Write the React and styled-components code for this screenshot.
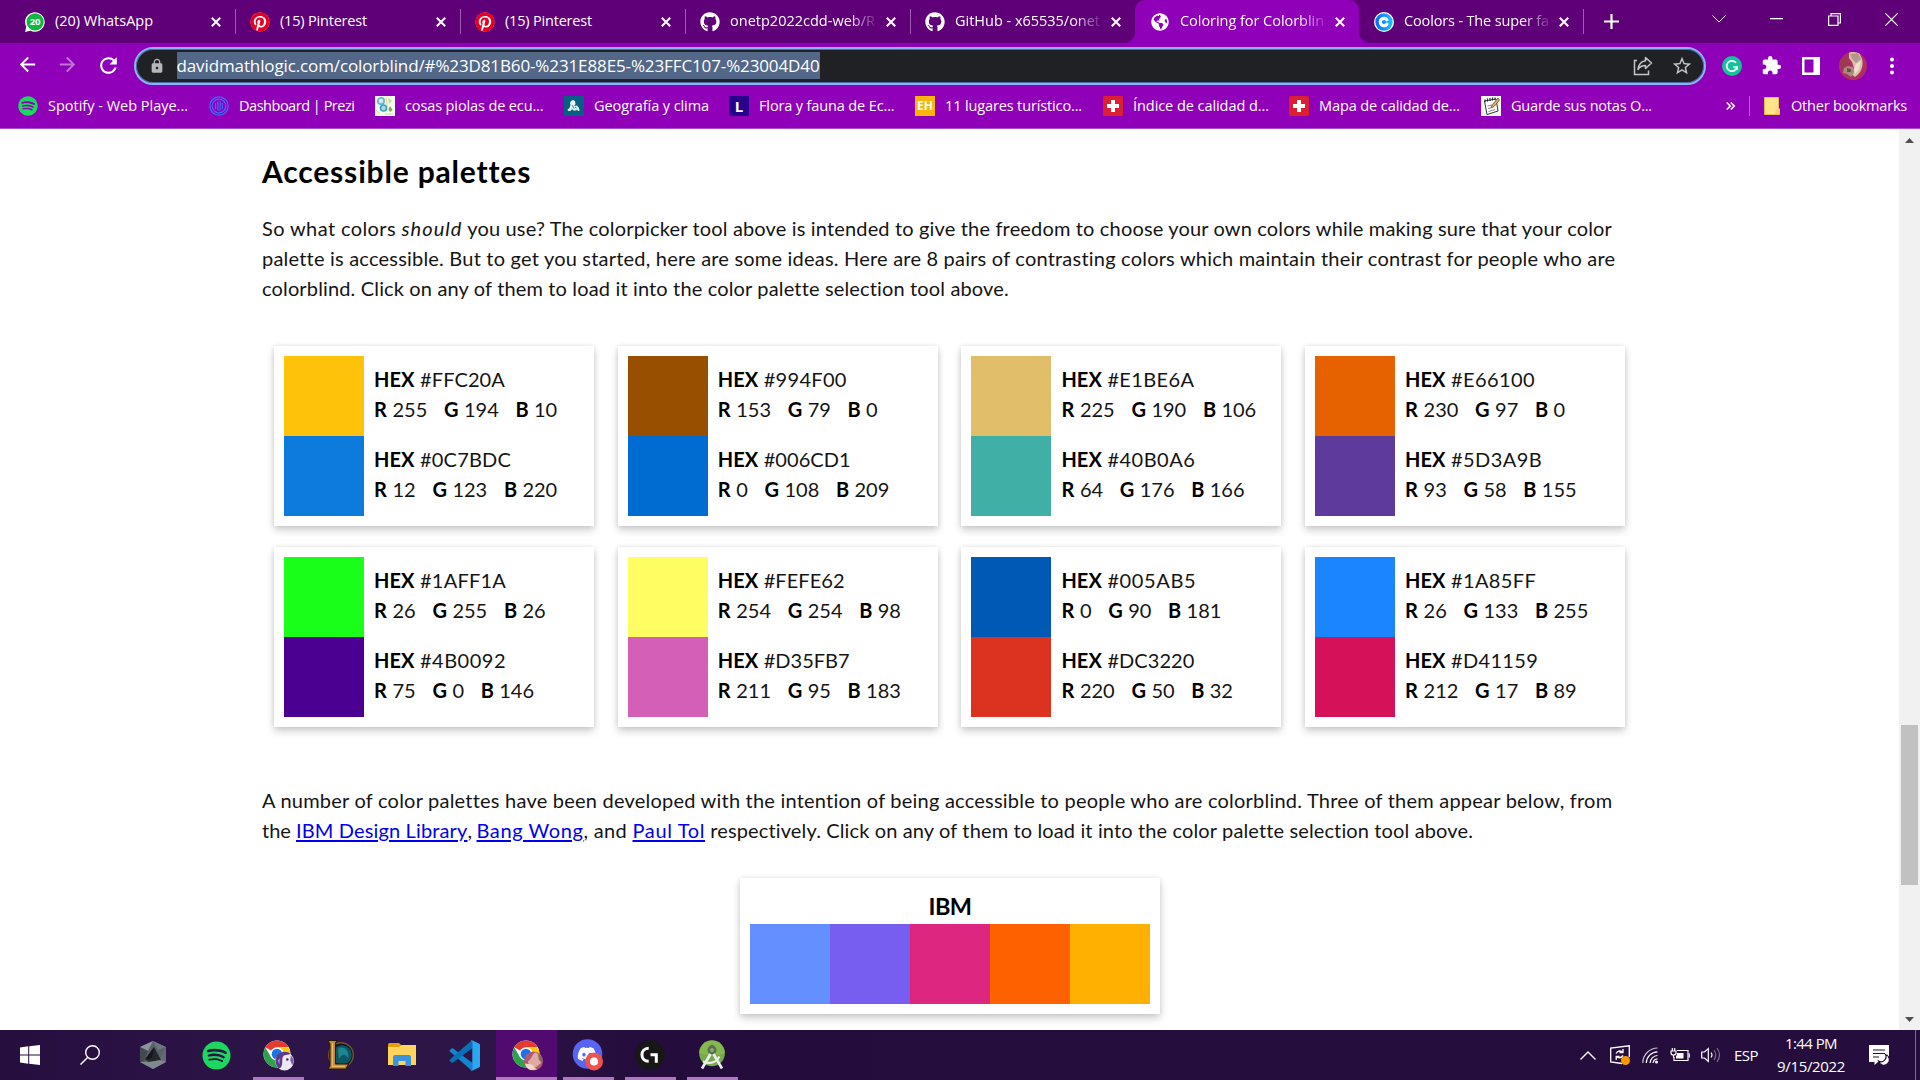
import React, { useLayoutEffect, useRef, useState } from "react";
import styled, { createGlobalStyle, css } from "styled-components";
import { FaPinterest, FaGithub, FaSpotify, FaDiscord, FaGlobeAmericas } from "react-icons/fa";
import { MdExtension, MdStarBorder, MdLock, MdRefresh, MdArrowBack, MdArrowForward } from "react-icons/md";

const UI_FONT = '"Open Sans", "Noto Sans", sans-serif';
const PAGE_FONT = 'Lato, "Open Sans", sans-serif';

const Global = createGlobalStyle`
  *, *::before, *::after { box-sizing: border-box; }
  html, body { margin: 0; padding: 0; overflow: hidden; background: #fff; }
  svg { display: block; flex: none; }
`;

/* ---------- text tracked out to a set measure ---------- */
const Tracked = styled.span`
  display: inline-block;
  white-space: pre;
  text-decoration: inherit;
`;

function Fit({ w, children, as, ...rest }) {
  const ref = useRef(null);
  const [spacing, setSpacing] = useState(0);
  useLayoutEffect(() => {
    const el = ref.current;
    const count = el.textContent.length;
    const natural = el.getBoundingClientRect().width;
    setSpacing((w - natural) / count);
  }, [w]);
  return (
    <Tracked ref={ref} as={as} style={{ letterSpacing: `${spacing}px` }} {...rest}>
      {children}
    </Tracked>
  );
}

/* ---------- frame ---------- */
const Screen = styled.div`
  width: 1920px;
  height: 1080px;
  display: flex;
  flex-direction: column;
  overflow: hidden;
  font-family: ${UI_FONT};
`;

/* ---------- tab strip ---------- */
const TabStrip = styled.div`
  height: 43px;
  flex: none;
  display: flex;
  align-items: stretch;
  padding-left: 10px;
  background: #5f0079;
  color: #fff;
`;

const TabBox = styled.div`
  position: relative;
  width: ${(p) => p.$w || 225}px;
  flex: none;
  display: flex;
  align-items: center;
  padding: 0 14px 0 15px;
  ${(p) =>
    p.$active &&
    css`
      background: #8f00b8;
      border-radius: 10px 10px 0 0;
      &::before,
      &::after {
        content: "";
        position: absolute;
        bottom: 0;
        width: 10px;
        height: 10px;
      }
      &::before {
        left: -10px;
        background: radial-gradient(circle at 0 0, transparent 9.5px, #8f00b8 10px);
      }
      &::after {
        right: -10px;
        background: radial-gradient(circle at 100% 0, transparent 9.5px, #8f00b8 10px);
      }
    `}
  ${(p) =>
    p.$sep &&
    css`
      &::after {
        content: "";
        position: absolute;
        right: -1px;
        top: 9px;
        width: 1px;
        height: 25px;
        background: #9a5cab;
      }
    `}
`;

const Fav = styled.div`
  width: 20px;
  height: 20px;
  flex: none;
  display: flex;
  align-items: center;
  justify-content: center;
  margin-right: 10px;
`;

const TabTitle = styled.div`
  flex: 1;
  font-size: 14.5px;
  line-height: 20px;
  white-space: nowrap;
  overflow: hidden;
  margin-bottom: 1px;
  ${(p) => p.$fade && css`mask-image: linear-gradient(90deg, #000 118px, transparent 149px);`}
`;

const NewTab = styled.div`
  display: flex;
  align-items: center;
  padding-left: 21px;
  flex: 1;
`;

const WindowButtons = styled.div`
  display: flex;
  align-items: center;
  height: 38px;
  gap: 40.5px;
  padding-right: 20px;
`;

const WinBtn = styled.div`
  width: 17px;
  display: flex;
  justify-content: center;
`;

/* ---------- toolbar ---------- */
const Toolbar = styled.div`
  height: 45px;
  flex: none;
  display: flex;
  align-items: center;
  background: #8f00b8;
  padding: 0 22px 0 16px;
  color: #fff;
`;

const NavButtons = styled.div`
  display: flex;
  gap: 17px;
  width: 118px;
  flex: none;
  svg:nth-child(2) { opacity: 0.45; }
`;

const Omnibox = styled.div`
  width: 1572px;
  height: 38px;
  flex: none;
  display: flex;
  align-items: center;
  border: 2px solid #8ab4f8;
  border-radius: 19px;
  box-shadow: inset 0 0 0 1px #4c6aa6;
  background: #202124;
  padding: 0 11px 0 13px;
`;

const Address = styled.div`
  height: 27px;
  margin-left: 11.5px;
  display: flex;
  align-items: center;
  background: #536788;
  color: #fff;
  font-size: 17px;
  line-height: 27px;
`;

const Spacer = styled.div`
  flex: 1;
`;

const OmniActions = styled.div`
  display: flex;
  align-items: center;
  gap: 18px;
  color: #c3c5c8;
`;

const Extensions = styled.div`
  flex: 1;
  display: flex;
  align-items: center;
  justify-content: space-between;
  padding-left: 16px;
`;

const Avatar = styled.div`
  width: 28px;
  height: 28px;
  border-radius: 50%;
  overflow: hidden;
`;

/* ---------- bookmarks ---------- */
const Bookmarks = styled.div`
  height: 41px;
  flex: none;
  display: flex;
  align-items: center;
  background: #8f00b8;
  border-bottom: 1px solid #b04ccc;
  padding: 0 13px 4px 18px;
  color: #fff;
  font-size: 14.5px;
`;

const Bookmark = styled.div`
  display: flex;
  align-items: center;
  width: ${(p) => p.$w}px;
  flex: none;
  line-height: 20px;
`;

const Tile = styled.div`
  width: 20px;
  height: 20px;
  display: flex;
  align-items: center;
  justify-content: center;
  border-radius: ${(p) => p.$r || 0}px;
  background: ${(p) => p.$bg};
  color: #fff;
  font: 700 ${(p) => p.$fs || 14}px/20px ${UI_FONT};
`;

const Divider = styled.div`
  width: 1px;
  height: 20px;
  background: #b85fd0;
  margin: 0 14px 0 13px;
`;

const OtherLabel = styled.div`
  line-height: 20px;
`;

/* ---------- page ---------- */
const Viewport = styled.div`
  height: 901px;
  flex: none;
  display: flex;
  background: #fff;
`;

const Page = styled.main`
  flex: 1;
  padding: 0 0 0 262px;
  overflow: hidden;
  font-family: ${PAGE_FONT};
  color: #000;
`;

const Heading = styled.h2`
  margin: 20px 0 0;
  height: 44px;
  font-size: 30px;
  line-height: 44px;
  font-weight: 700;
`;

const Paragraph = styled.div`
  margin-top: ${(p) => p.$mt}px;
  font-size: 20px;
  line-height: 30px;
  color: #141414;
`;

const Line = styled.div`
  display: flex;
  height: 30px;
`;

const Link = styled.a`
  color: #0000ee;
  text-decoration: underline;
  text-decoration-thickness: 1.5px;
  text-underline-offset: 2px;
`;

const PairGrid = styled.div`
  display: grid;
  grid-template-columns: repeat(4, 320px);
  column-gap: 23.7px;
  row-gap: 21px;
  margin: 43px 0 0 12px;
`;

const cardSurface = css`
  background: #fff;
  box-shadow: 0 4px 8px rgba(0, 0, 0, 0.2), 0 0 5px rgba(0, 0, 0, 0.08);
`;

const PairCard = styled.div`
  ${cardSurface}
  height: 180px;
  padding: 10px;
`;

const ColorRow = styled.div`
  display: flex;
  height: 80px;
`;

const Swatch = styled.div`
  width: 80px;
  height: 80px;
  flex: none;
  background: ${(p) => p.$c};
`;

const Codes = styled.div`
  padding: 8px 0 0 10px;
  font-size: 20px;
  line-height: 30px;
  white-space: nowrap;
  color: #141414;
`;

const CodeLine = styled.div`
  display: flex;
  height: 30px;
`;

const Label = styled.b`
  width: ${(p) => p.$w}px;
  font-weight: 700;
  flex: none;
  color: #000;
`;

const Channel = styled.span`
  display: flex;
  margin-right: 16.7px;
`;

const PaletteCard = styled.div`
  ${cardSurface}
  width: 420px;
  height: 136px;
  margin: 33px 0 0 478px;
  padding: 10px;
`;

const PaletteName = styled.div`
  height: 36px;
  display: flex;
  justify-content: center;
  font-size: 23.5px;
  line-height: 36px;
  font-weight: 700;
`;

const ScrollTrack = styled.div`
  width: 21px;
  flex: none;
  background: #f1f1f1;
  display: flex;
  flex-direction: column;
  align-items: center;
  padding: 9px 0 8px;
`;

const ScrollThumb = styled.div`
  width: 17px;
  height: 160px;
  margin: 582px 0 auto;
  background: #c1c1c1;
`;

/* ---------- taskbar ---------- */
const Taskbar = styled.div`
  height: 50px;
  flex: none;
  display: flex;
  background: linear-gradient(90deg, #260e3f 0, #2d1549 300px, #2d1548 480px, #240d3c 640px, #250d3d 1920px);
  color: #fff;
`;

const TaskSlot = styled.div`
  position: relative;
  width: ${(p) => p.$w || 62}px;
  height: 50px;
  flex: none;
  display: flex;
  align-items: center;
  justify-content: center;
  background: ${(p) => (p.$active ? "#500a70" : "transparent")};
  ${(p) =>
    p.$line &&
    css`
      &::after {
        content: "";
        position: absolute;
        bottom: 0;
        left: ${p.$active ? 0 : 6}px;
        right: ${p.$active ? 0 : 5}px;
        height: 3px;
        background: #b078bc;
      }
    `}
`;

const Tray = styled.div`
  display: flex;
  align-items: center;
  font-size: 15px;
`;

const TrayItem = styled.div`
  width: ${(p) => p.$w}px;
  display: flex;
  align-items: center;
  justify-content: center;
`;

const Clock = styled.div`
  width: 76px;
  margin: 0 20px 0 9px;
  display: flex;
  flex-direction: column;
  align-items: center;
  line-height: 23px;
  padding-bottom: 1px;
`;

const ShowDesktop = styled.div`
  width: 5px;
  height: 50px;
  border-left: 1px solid #7d6e8b;
  margin-left: 26px;
`;

/* ---------- drawings ---------- */
const Close = () => (
  <svg width="10" height="10" viewBox="0 0 10 10" stroke="#fff" strokeWidth="2">
    <path d="M.8.8l8.4 8.4M9.2.8L.8 9.2" />
  </svg>
);

const WhatsappTab = () => (
  <svg width="20" height="20" viewBox="0 0 20 20">
    <path d="M0 20L1.300 14.800A9.800 9.800 0 1 1 5.300 18.700z" fill="#fff" />
    <circle cx="10.100" cy="9.900" r="8.600" fill="#12b83e" />
    <text x="10.100" y="13.400" textAnchor="middle" fill="#fff" fontSize="9.500" fontWeight="700" fontFamily="Open Sans">20</text>
  </svg>
);

const Pin = () => (
  <svg width="20" height="20" viewBox="0 0 20 20">
    <circle cx="10" cy="10" r="9.500" fill="#fff" />
    <FaPinterest size={20} color="#e60023" />
  </svg>
);

const CoolorsIcon = () => (
  <svg width="20" height="20" viewBox="0 0 20 20">
    <defs>
      <linearGradient id="cool"><stop stopColor="#0068ff" /><stop offset="1" stopColor="#1fc4f8" /></linearGradient>
    </defs>
    <circle cx="10" cy="10" r="10" fill="#fff" />
    <circle cx="10" cy="10" r="8.700" fill="url(#cool)" />
    <path d="M12.900 7.700A3.700 3.700 0 1 0 12.900 12.300" fill="none" stroke="#fff" strokeWidth="3.200" strokeLinecap="round" />
  </svg>
);

const Share = () => (
  <svg width="20" height="20" viewBox="0 0 20 20" fill="none" stroke="#c3c5c8" strokeWidth="1.500">
    <path d="M4 4.500H1.500V18.500H15.500V14.500" />
    <path d="M12.500 1.500L18.500 7L12.500 12.500V9.500C9 9.500 6.500 11 5 13.500C5.500 9 8 5.500 12.500 4.800z" strokeLinejoin="round" />
  </svg>
);

const Grammarly = () => (
  <svg width="20" height="20" viewBox="0 0 20 20">
    <circle cx="10" cy="10" r="10" fill="#15c39a" />
    <path d="M14 6.800A5.200 5.200 0 1 0 15 11H11M15 11V14" fill="none" stroke="#fff" strokeWidth="1.700" />
  </svg>
);

const SidePanel = () => (
  <svg width="18" height="18" viewBox="0 0 18 18">
    <path d="M0 0H18V18H0zM2.500 2.500V15.500H11.500V2.500z" fill="#fff" fillRule="evenodd" />
  </svg>
);

const Cat = () => (
  <svg width="28" height="28" viewBox="0 0 28 28">
    <rect width="28" height="28" fill="#b0305f" />
    <path d="M0 8L9 2L8 14L2 18z" fill="#9c3a52" />
    <path d="M10 0H20L23 7C25 14 22 21 16 25L12 22L15 16L13 10L10 6z" fill="#d9c0ae" />
    <path d="M11 2L19 1L22 7L17 11L13 7z" fill="#b09a8a" />
    <path d="M5 16L9 14L14 15L16 19L12 25L8 22L4 21z" fill="#a98a7c" />
    <path d="M8 16L12 17L12 20L8 20z" fill="#6e5048" />
    <path d="M17 12L22 9L20 17L16 22L15 18z" fill="#efe0d3" />
  </svg>
);

const Prezi = () => (
  <svg width="20" height="20" viewBox="0 0 20 20" fill="none" stroke="#3f6bff" strokeWidth="1.200">
    <circle cx="10" cy="10" r="9.200" />
    <circle cx="10" cy="10" r="6.800" />
    <path d="M6.500 7V13M8.300 5.500V14.500M10 5V15M11.700 5.500V14.500M13.500 7V13" strokeWidth=".9" />
  </svg>
);

const LeafPic = () => (
  <svg width="20" height="20" viewBox="0 0 20 20">
    <rect width="20" height="20" fill="#f6f8ef" />
    <circle cx="6" cy="5" r="3.200" fill="#cfe9f0" stroke="#5fb4cf" strokeWidth="1.600" />
    <circle cx="8.500" cy="12" r="3" fill="#a7dbe8" stroke="#3a9fc2" strokeWidth="1.600" />
    <path d="M13 2L17 5L14 8z" fill="#c9dc9a" />
    <path d="M15 10L17.500 14L15 16L13.500 13z" fill="#76ad45" />
    <path d="M1 14L5 18M11 2L13 14M10 18L18 18" stroke="#dcd98f" />
  </svg>
);

const Frog = () => (
  <svg width="20" height="20" viewBox="0 0 20 20">
    <rect width="20" height="20" fill="#066083" />
    <path d="M7 5L9 4L11 5L11.500 8L10 10L13 9.500L15 12L15.500 15H14L13 13.500L12 14.500H9.500L8 13L6.500 15H4L3.500 13.500L5.500 12L6.500 9L6 7z" fill="#e8f4f6" />
    <path d="M8 9L10 12.500M12.500 12L11 11" stroke="#066083" strokeWidth=".8" />
  </svg>
);

const Notes = () => (
  <svg width="20" height="20" viewBox="0 0 20 20">
    <rect width="20" height="20" fill="#f7f7f2" />
    <path d="M3.500 5L15 3L17 15L6 18.500z" fill="#fff" stroke="#334" strokeWidth="1" />
    <path d="M4 3.500V6M6.500 2.500V5.500M9 2V5M11.500 1.500V4.500M14 1.500V4" stroke="#223" strokeWidth="1.100" />
    <path d="M6.500 10L11 9M7 12.500L10 12M7.500 15.500L14 13.500" stroke="#778" strokeWidth=".9" />
    <path d="M17 2L11.500 8.500L10 12L13 10.500L18.500 4z" fill="#f0b03c" stroke="#345" strokeWidth=".7" />
  </svg>
);

const Cross = () => (
  <svg width="20" height="20" viewBox="0 0 20 20">
    <rect width="20" height="20" rx="1.500" fill="#da2032" />
    <path d="M8 4H12V8H16V12H12V16H8V12H4V8H8z" fill="#fff" />
  </svg>
);

const Folder = () => (
  <svg width="16" height="18" viewBox="0 0 16 18">
    <path d="M.5.500H14.500V11L15.500 12V17.500H.5z" fill="#ffe48c" stroke="#e8bd4c" />
    <path d="M11.500 17V12.500H15.500V17z" fill="#f7d066" />
  </svg>
);

const Chrome = ({ children }) => (
  <svg width="32" height="32" viewBox="0 0 32 32">
    <g transform="translate(.8 .5)">
      <circle cx="14.200" cy="14.500" r="13.500" fill="#fff" />
      <path d="M14.200 14.500L2.500 7.800A13.500 13.500 0 0 1 25.900 7.800H14.200z" fill="#e33b2e" />
      <path d="M14.200 7.800H25.900A13.500 13.500 0 0 1 14.200 28L20 17.800z" fill="#fdc912" />
      <path d="M2.500 7.800L8.400 17.900L20 17.900L14.200 28A13.500 13.500 0 0 1 2.500 7.800z" fill="#2ba24c" />
      <circle cx="14.200" cy="14.500" r="6.700" fill="#fff" />
      <circle cx="14.200" cy="14.500" r="5.300" fill="#1a73e8" />
      {children}
    </g>
  </svg>
);

const UnicornBadge = () => (
  <g>
    <circle cx="21.700" cy="21.700" r="9.300" fill="#ece8f4" />
    <path d="M14 16C17 12 24 11 28 14.500L21 16C18 19 21 24 18 28L16 29C12 25 12 20 14 16z" fill="#5b3b8c" />
    <path d="M28 16L31 20L29.500 26L27.500 21z" fill="#7a5ba6" />
    <circle cx="24.500" cy="20" r="1.300" fill="#443066" />
    <path d="M15 21L17 19L16.500 25z" fill="#a995cc" />
  </g>
);

const CatBadge = () => (
  <g>
    <circle cx="21.700" cy="21.500" r="9.500" fill="#b05a72" />
    <path d="M16 22C20 20 20 14 24 13L29 16L30 23L25 27C20 29 17 26 16 22z" fill="#dfaaa2" />
    <path d="M13 24L20 25L25 30L19 30.500C16 30 14 27 13 24z" fill="#eed9c6" />
    <path d="M26 13.500L30.500 18L30 24L27 20z" fill="#8a6758" />
  </g>
);

const Gem = () => (
  <svg width="26" height="28" viewBox="0 0 26 28">
    <path d="M13 0L26 6V21L13 28L0 21V6z" fill="#59616a" />
    <path d="M13 0L26 6L18 9z" fill="#6d757d" />
    <path d="M13 0L0 6L8 10z" fill="#8c949a" />
    <path d="M0 6L8 10L4 20L0 21z" fill="#434a52" />
    <path d="M26 6V21L20 18z" fill="#626b73" />
    <path d="M14 6L21 19L9 21L5 18z" fill="#24282d" />
    <path d="M14 6L12 17L5 19z" fill="#15181b" />
    <path d="M0 21L9 21L21 19L26 21L13 28z" fill="#7f888f" />
  </svg>
);

const League = () => (
  <svg width="28" height="30" viewBox="0 0 28 30">
    <circle cx="15" cy="15" r="12.300" fill="#0a1a24" stroke="#6f562b" strokeWidth="1.400" />
    <circle cx="16" cy="15" r="9.800" fill="#0d5664" />
    <path d="M12 9C17 5 24 10 22 19C20 13 16 14 13 19z" fill="#1c8790" />
    <path d="M2 .5H11L9.500 3V24H22.500L20 29H2L4 26V4z" fill="#c48b37" stroke="#24170b" />
    <path d="M6.500 3V26.300H19" fill="none" stroke="#e7b860" strokeWidth="1.200" />
  </svg>
);

const Explorer = () => (
  <svg width="28" height="24" viewBox="0 0 28 24">
    <path d="M0 1.500Q0 0 1.500 0H11L13.500 2.500V6H0z" fill="#e3a008" />
    <path d="M0 4H11L13.500 2H28V22H0z" fill="#ffd45c" />
    <path d="M5 23V14Q5 12 7 12H21Q23 12 23 14V23H17.500V18H10.500V23z" fill="#3a93dc" />
  </svg>
);

const VSCode = () => (
  <svg width="31" height="31" viewBox="0 0 31 31">
    <path d="M1 9.800L2.600 8.400Q3.400 8 4.200 8.500L23.500 23V29.500L22.300 30.300L.9 11.600Q0 10.700 1 9.800z" fill="#0f86cd" />
    <path d="M1 21.200L2.600 22.600Q3.400 23 4.200 22.500L23.500 8V1.500L22.300.7L.9 19.400Q0 20.300 1 21.200z" fill="#0a70b5" />
    <path d="M23.500.4L30 3.400Q31 4 31 5V26Q31 27 30 27.600L23.500 30.600Q22.300 31 21.700 30Q23.300 30.500 23.300 28.500V2.500Q23.300.5 21.700 1Q22.300 0 23.500.4z" fill="#28a7f3" />
  </svg>
);

const Discord = () => (
  <svg width="32" height="32" viewBox="0 0 32 32">
    <circle cx="15.500" cy="15" r="14.800" fill="#5865f2" />
    <FaDiscord x="5" y="5" size={20} color="#fff" />
    <circle cx="22" cy="22.500" r="9" fill="#ef5350" />
    <circle cx="22" cy="22.500" r="4" fill="#fff" />
  </svg>
);

const Logi = () => (
  <svg width="30" height="30" viewBox="0 0 30 30">
    <circle cx="15" cy="15" r="15" fill="#171717" />
    <path d="M13.700 8.300C4.700 8.300 4.700 21.300 13.700 21.300" fill="none" stroke="#fff" strokeWidth="3" />
    <path d="M15.500 14.800H21.300V22.800" fill="none" stroke="#fff" strokeWidth="3" />
  </svg>
);

const AndroidStudio = () => (
  <svg width="26" height="30" viewBox="0 0 26 30">
    <circle cx="13" cy="13.500" r="12.800" fill="#78a94a" />
    <path d="M.2 13A12.800 12.800 0 0 1 25.800 13L13 16z" fill="#84b84c" />
    <circle cx="13" cy="10" r="3.200" fill="#84b84c" stroke="#5a6a60" strokeWidth="2.600" />
    <path d="M13 5V8" stroke="#5a6a60" strokeWidth="3" />
    <path d="M11.500 14L3 28.500M14.500 14L23 28.500" stroke="#eceff1" strokeWidth="2.600" fill="none" />
    <path d="M4 21.500Q15 26 20.500 16.500" stroke="#eceff1" strokeWidth="2.200" fill="none" />
  </svg>
);

const SyncIcon = () => (
  <svg width="20" height="20" viewBox="0 0 20 20" fill="none" stroke="#fff" strokeWidth="1.300">
    <path d="M12 18.500L.7 17V3L19.300.8V12" />
    <path d="M6 8.500Q8.500 4.500 12.500 7M13 4V7.500H9.500M13 10.500Q10.500 14 6.700 12M6.200 15V11.500H9.500" />
    <circle cx="15.500" cy="15.500" r="4.500" fill="#ff9800" stroke="none" />
  </svg>
);

const Wifi = () => (
  <svg width="17" height="17" viewBox="0 0 17 17" fill="none" stroke="#fff" strokeWidth="1.200">
    <path d="M.8 16A15 15 0 0 1 15.500 1" opacity=".75" />
    <path d="M4.300 16A11.500 11.500 0 0 1 15.500 4.800" />
    <path d="M8 16A8 8 0 0 1 15.500 8.500" />
    <path d="M11 16A5 5 0 0 1 15.500 11.800" />
    <circle cx="14.500" cy="15" r="1.500" fill="#fff" stroke="none" />
  </svg>
);

const Battery = () => (
  <svg width="20" height="14" viewBox="0 0 20 14" fill="none" stroke="#fff" strokeWidth="1.200">
    <path d="M7 2.500H18V12.500H4V9" />
    <path d="M19.300 5.500V9.500M1 3H6V5Q6 7 3.500 7Q1 7 1 5zM2.300 0V3M4.700 0V3M3.500 7V9.500" />
    <path d="M7 5H13.500V10.500H6V8L7 7z" fill="#fff" stroke="none" />
  </svg>
);

const Volume = () => (
  <svg width="20" height="18" viewBox="0 0 20 18" fill="none" stroke="#fff" strokeWidth="1.200">
    <path d="M.7 6H3.500L7.300 2.500V15.500L3.500 12H.7z" />
    <path d="M10 6.500Q12 9 10 11.500" />
    <path d="M13 4Q16.500 9 13 14M16 2Q21 9 16 16" opacity=".4" />
  </svg>
);

const Notification = () => (
  <svg width="20" height="20" viewBox="0 0 20 20">
    <path d="M0 0H20V17H9L5.500 20V17H0z" fill="#fff" />
    <path d="M4 5H16M4 8.500H16M4 12H10" stroke="#250d3d" strokeWidth="1.200" />
    <path d="M16.500 9.500A5.500 5.500 0 1 1 9.500 16A5 5 0 0 0 16.500 9.500z" fill="#fff" stroke="#250d3d" strokeWidth="1.200" />
  </svg>
);

/* ---------- data ---------- */
const TABS = [
  { title: "(20) WhatsApp", w: 98, icon: <WhatsappTab />, sep: true },
  { title: "(15) Pinterest", w: 87, icon: <Pin />, sep: true },
  { title: "(15) Pinterest", w: 87, icon: <Pin />, sep: true },
  { title: "onetp2022cdd-web/R", w: 145, icon: <FaGithub size={20} />, sep: true, fade: true },
  { title: "GitHub - x65535/onet", w: 145, icon: <FaGithub size={20} />, fade: true },
  { title: "Coloring for Colorblin", w: 144, icon: <FaGlobeAmericas size={18} />, active: true, fade: true, tabW: 224 },
  { title: "Coolors - The super fa", w: 145, icon: <CoolorsIcon />, sep: true, fade: true, tabW: 224 },
];

const BOOKMARKS = [
  { t: "Spotify - Web Playe...", w: 140, full: 191, icon: <FaSpotify size={20} color="#1ed760" /> },
  { t: "Dashboard | Prezi", w: 115.5, full: 166, icon: <Prezi /> },
  { t: "cosas piolas de ecu...", w: 138.5, full: 189, icon: <LeafPic /> },
  { t: "Geografía y clima", w: 115, full: 165, icon: <Frog /> },
  { t: "Flora y fauna de Ec...", w: 135.5, full: 186, icon: <Tile $bg="#28008c" $fs={15}>L</Tile> },
  { t: "11 lugares turístico...", w: 137, full: 188, icon: <Tile $bg="#fbb40a" $fs={12}>EH</Tile> },
  { t: "Índice de calidad d...", w: 136, full: 186, icon: <Cross /> },
  { t: "Mapa de calidad de...", w: 141, full: 192, icon: <Cross /> },
  { t: "Guarde sus notas O...", w: 141, full: 244.5, icon: <Notes /> },
];

const PAIRS = [
  [["#FFC20A", 255, 194, 10, 85], ["#0C7BDC", 12, 123, 220, 91]],
  [["#994F00", 153, 79, 0, 83], ["#006CD1", 0, 108, 209, 87]],
  [["#E1BE6A", 225, 190, 106, 87], ["#40B0A6", 64, 176, 166, 88]],
  [["#E66100", 230, 97, 0, 84], ["#5D3A9B", 93, 58, 155, 91]],
  [["#1AFF1A", 26, 255, 26, 86], ["#4B0092", 75, 0, 146, 86]],
  [["#FEFE62", 254, 254, 98, 81], ["#D35FB7", 211, 95, 183, 86]],
  [["#005AB5", 0, 90, 181, 89], ["#DC3220", 220, 50, 32, 87]],
  [["#1A85FF", 26, 133, 255, 85], ["#D41159", 212, 17, 89, 87]],
];

const IBM = ["#648FFF", "#785EF0", "#DC267F", "#FE6100", "#FFB000"];

function PairColor({ c: [hex, r, g, b, w] }) {
  return (
    <ColorRow>
      <Swatch $c={hex} />
      <Codes>
        <CodeLine>
          <Label $w={46}><Fit w={40.5}>HEX</Fit></Label>
          <Fit w={w}>{hex}</Fit>
        </CodeLine>
        <CodeLine>
          <Channel><Label $w={18.5}>R</Label>{r}</Channel>
          <Channel><Label $w={20}>G</Label>{g}</Channel>
          <Channel><Label $w={18.5}>B</Label>{b}</Channel>
        </CodeLine>
      </Codes>
    </ColorRow>
  );
}

export default function App() {
  return (
    <Screen>
      <Global />
      <TabStrip>
        {TABS.map((t, i) => (
          <TabBox key={i} $active={t.active} $sep={t.sep} $w={t.tabW}>
            <Fav>{t.icon}</Fav>
            <TabTitle $fade={t.fade}><Fit w={t.w}>{t.title}</Fit></TabTitle>
            <Close />
          </TabBox>
        ))}
        <NewTab>
          <svg width="15" height="15" viewBox="0 0 15 15" stroke="#fff" strokeWidth="2.200"><path d="M7.500 0V15M0 7.500H15" /></svg>
        </NewTab>
        <WindowButtons>
          <WinBtn>
            <svg width="14" height="8" viewBox="0 0 14 8" fill="none" stroke="#fff"><path d="M.5.500L7 7L13.500.5" /></svg>
          </WinBtn>
          <WinBtn>
            <svg width="13" height="2" viewBox="0 0 13 2"><rect width="13" height="1.300" fill="#fff" /></svg>
          </WinBtn>
          <WinBtn>
            <svg width="13" height="13" viewBox="0 0 13 13" fill="none" stroke="#fff" strokeWidth="1.200"><path d="M.6 3H10V12.400H.6zM3 3V.6H12.400V10H10" /></svg>
          </WinBtn>
          <WinBtn>
            <svg width="13" height="13" viewBox="0 0 13 13" stroke="#fff" strokeWidth="1.200"><path d="M.4.400L12.600 12.600M12.600.4L.4 12.600" /></svg>
          </WinBtn>
        </WindowButtons>
      </TabStrip>

      <Toolbar>
        <NavButtons>
          <MdArrowBack size={23} />
          <MdArrowForward size={23} />
          <MdRefresh size={25} />
        </NavButtons>
        <Omnibox>
          <MdLock size={16} color="#b5b8bb" />
          <Address>
            <Fit w={643}>davidmathlogic.com/colorblind/#%23D81B60-%231E88E5-%23FFC107-%23004D40</Fit>
          </Address>
          <Spacer />
          <OmniActions>
            <Share />
            <MdStarBorder size={22} />
          </OmniActions>
        </Omnibox>
        <Extensions>
          <Grammarly />
          <MdExtension size={21} />
          <SidePanel />
          <Avatar><Cat /></Avatar>
          <svg width="12" height="18" viewBox="0 0 12 18" fill="#fff"><circle cx="6" cy="2.500" r="2" /><circle cx="6" cy="9" r="2" /><circle cx="6" cy="15.500" r="2" /></svg>
        </Extensions>
      </Toolbar>

      <Bookmarks>
        {BOOKMARKS.map((b) => (
          <Bookmark key={b.t} $w={b.full}>
            <Fav>{b.icon}</Fav>
            <Fit w={b.w}>{b.t}</Fit>
          </Bookmark>
        ))}
        <svg width="10" height="8" viewBox="0 0 10 8" fill="none" stroke="#fff" strokeWidth="1.600"><path d="M.8.500L4.200 4L.8 7.500M4.800.5L8.200 4L4.800 7.500" /></svg>
        <Divider />
        <Folder />
        <Spacer />
        <OtherLabel><Fit w={116}>Other bookmarks</Fit></OtherLabel>
      </Bookmarks>

      <Viewport>
        <Page>
          <Heading><Fit w={268}>Accessible palettes</Fit></Heading>
          <Paragraph $mt={20}>
            <Line>
              <Fit w={139.5}>So what colors </Fit>
              <Fit w={61} as="em">should</Fit>
              <Fit w={1149.5}> you use? The colorpicker tool above is intended to give the freedom to choose your own colors while making sure that your color</Fit>
            </Line>
            <Line><Fit w={1353}>palette is accessible. But to get you started, here are some ideas. Here are 8 pairs of contrasting colors which maintain their contrast for people who are</Fit></Line>
            <Line><Fit w={746.5}>colorblind. Click on any of them to load it into the color palette selection tool above.</Fit></Line>
          </Paragraph>

          <PairGrid>
            {PAIRS.map((pair) => (
              <PairCard key={pair[0][0]}>
                {pair.map((c) => <PairColor key={c[0]} c={c} />)}
              </PairCard>
            ))}
          </PairGrid>

          <Paragraph $mt={58}>
            <Line><Fit w={1350}>A number of color palettes have been developed with the intention of being accessible to people who are colorblind. Three of them appear below, from</Fit></Line>
            <Line>
              <Fit w={34}>the </Fit>
              <Link><Fit w={171.5}>IBM Design Library</Fit></Link>
              <Fit w={9}>, </Fit>
              <Link><Fit w={107}>Bang Wong</Fit></Link>
              <Fit w={49}>, and </Fit>
              <Link><Fit w={72.5}>Paul Tol</Fit></Link>
              <Fit w={768}> respectively. Click on any of them to load it into the color palette selection tool above.</Fit>
            </Line>
          </Paragraph>

          <PaletteCard>
            <PaletteName><Fit w={43}>IBM</Fit></PaletteName>
            <ColorRow>{IBM.map((c) => <Swatch key={c} $c={c} />)}</ColorRow>
          </PaletteCard>
        </Page>
        <ScrollTrack>
          <svg width="9" height="5" viewBox="0 0 9 5"><path d="M0 5L4.500 0L9 5z" fill="#505050" /></svg>
          <ScrollThumb />
          <svg width="9" height="5" viewBox="0 0 9 5"><path d="M0 0L4.500 5L9 0z" fill="#505050" /></svg>
        </ScrollTrack>
      </Viewport>

      <Taskbar>
        <TaskSlot $w={60}>
          <svg width="20" height="20" viewBox="0 0 20 20" fill="#fff"><path d="M0 2.500L8.200 1.300V9.500H0zM9.200 1.200L20 0V9.500H9.200zM0 10.500H8.200V18.700L0 17.500zM9.200 10.500H20V20L9.200 18.800z" /></svg>
        </TaskSlot>
        <TaskSlot $w={60}>
          <svg width="20" height="20" viewBox="0 0 20 20" fill="none" stroke="#fff" strokeWidth="1.400"><circle cx="12.500" cy="7.500" r="6.800" /><path d="M7.800 12.300L.5 19.600" /></svg>
        </TaskSlot>
        <TaskSlot $w={66}><Gem /></TaskSlot>
        <TaskSlot $w={61}><FaSpotify size={29} color="#1ed760" /></TaskSlot>
        <TaskSlot $line><Chrome><UnicornBadge /></Chrome></TaskSlot>
        <TaskSlot><League /></TaskSlot>
        <TaskSlot><Explorer /></TaskSlot>
        <TaskSlot $w={63}><VSCode /></TaskSlot>
        <TaskSlot $w={61} $line $active><Chrome><CatBadge /></Chrome></TaskSlot>
        <TaskSlot $line><Discord /></TaskSlot>
        <TaskSlot $line><Logi /></TaskSlot>
        <TaskSlot $line><AndroidStudio /></TaskSlot>
        <Spacer />
        <Tray>
          <TrayItem $w={36}>
            <svg width="16" height="9" viewBox="0 0 16 9" fill="none" stroke="#fff" strokeWidth="1.400"><path d="M.5 8.500L8 1L15.500 8.500" /></svg>
          </TrayItem>
          <TrayItem $w={28}><SyncIcon /></TrayItem>
          <TrayItem $w={32}><Wifi /></TrayItem>
          <TrayItem $w={28}><Battery /></TrayItem>
          <TrayItem $w={34}><Volume /></TrayItem>
          <TrayItem $w={36}><Fit w={24}>ESP</Fit></TrayItem>
          <Clock>
            <Fit w={52}>1:44 PM</Fit>
            <Fit w={68}>9/15/2022</Fit>
          </Clock>
          <Notification />
          <ShowDesktop />
        </Tray>
      </Taskbar>
    </Screen>
  );
}
